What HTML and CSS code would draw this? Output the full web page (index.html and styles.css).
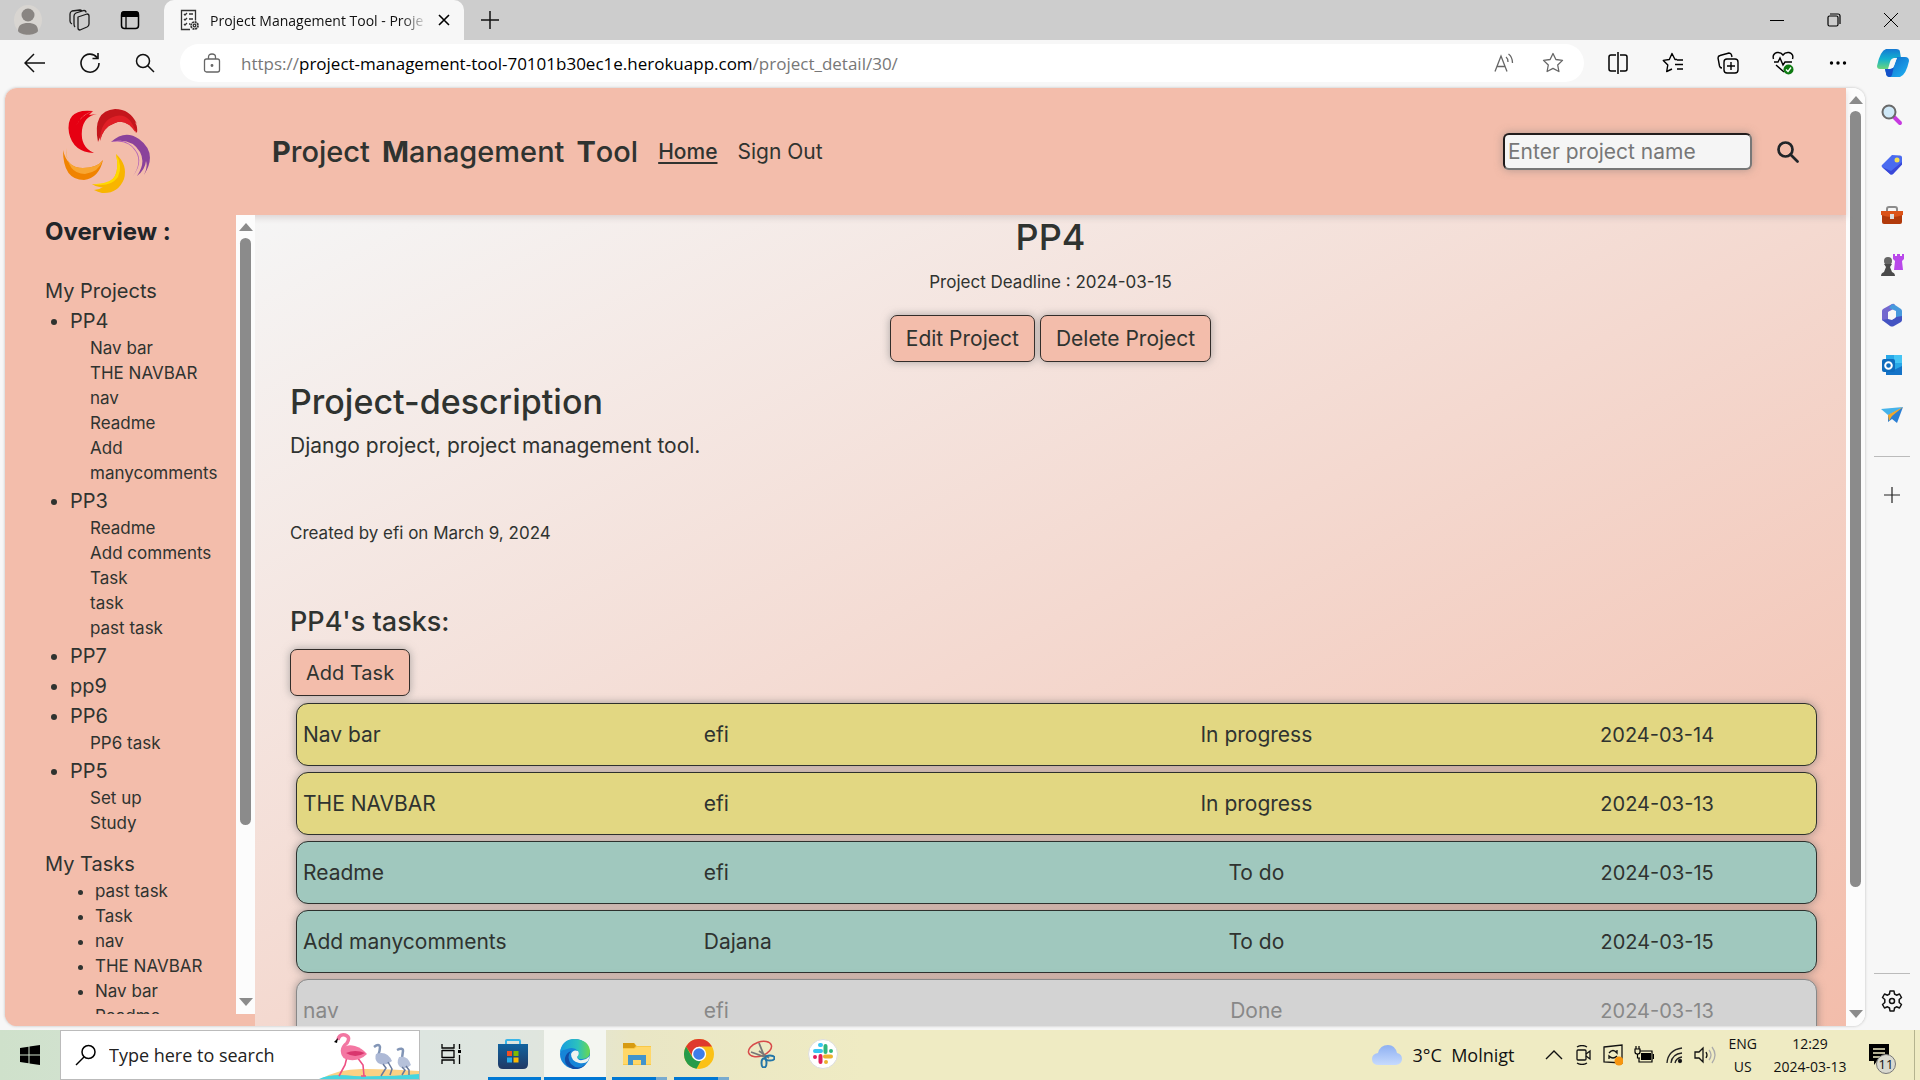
FILE: index.html
```html
<!DOCTYPE html>
<html lang="en">
<head>
<meta charset="utf-8">
<title>Project Management Tool - Project Detail</title>
<link rel="stylesheet" href="styles.css">
</head>
<body>
<div class="tabstrip">
  <button class="strip-btn" aria-label="Profile"><svg width="28" height="34" viewBox="0 0 28 34"><ellipse cx="14" cy="17" rx="14" ry="15" fill="#d8d5d1"/><circle cx="14" cy="12" r="6.500" fill="#898582"/><path d="M4 28c0-6 4-8 10-8s10 2 10 8c-3 5-17 5-20 0z" fill="#898582"/></svg></button>
  <button class="strip-btn" aria-label="Workspaces"><svg width="22" height="22" viewBox="0 0 22 22" fill="none" stroke="#1b1b1b" stroke-width="1.300"><path d="M10 8l9-3q2 0 2 2v8q0 2-2 3l-7 3q-2 0-2-2z" stroke-linejoin="round"/><path d="M7 18q-1-1-1-3V7q0-2 2-3l8-2.500q2 0 2 2M4 15q-2-1-2-3V5q0-2 2-3l8-1q1 0 2 1"/></svg></button>
  <button class="strip-btn" aria-label="Tab actions"><svg width="20" height="20" viewBox="0 0 20 20"><rect x="1.500" y="2" width="17" height="16.500" rx="3" fill="none" stroke="#000" stroke-width="1.500"/><path d="M1 7V4q0-3 3-3h12q3 0 3 3v3z"/><path d="M6 7v11" stroke="#000" stroke-width="1.300"/></svg></button>
  <div class="tab">
    <svg width="20" height="22" viewBox="0 0 20 22" fill="none" stroke="#333" stroke-width="1.300"><path d="M10 20.500H1.500v-19h14v10"/><path d="M4 5l1 1 2-2M4 10l1 1 2-2M4 15l1 1 2-2M9 5h4M9 10h4M9 15h1"/><circle cx="14.500" cy="16.500" r="3.500" stroke-width="1.800" stroke-dasharray="2 .7"/><circle cx="14.500" cy="16.500" r="1.300"/></svg>
    <span class="tab-title">Project Management Tool - Proje</span>
    <button class="bare" aria-label="Close tab"><svg width="12" height="12" viewBox="0 0 12 12" stroke="#000" stroke-width="1.600"><path d="M1 1l10 10M11 1L1 11"/></svg></button>
  </div>
  <button class="strip-btn new-tab" aria-label="New tab"><svg width="18" height="18" viewBox="0 0 18 18" stroke="#111" stroke-width="1.500"><path d="M9 0v18M0 9h18"/></svg></button>
  <div class="window-controls">
    <button class="bare" aria-label="Minimise"><svg width="14" height="14" viewBox="0 0 14 14" stroke="#000"><path d="M0 7.500h14"/></svg></button>
    <button class="bare" aria-label="Restore"><svg width="14" height="14" viewBox="0 0 14 14" fill="none" stroke="#000" stroke-width="1.200"><rect x="1" y="3" width="10" height="10" rx="1.500"/><path d="M3 1h8q2 0 2 2v8"/></svg></button>
    <button class="bare" aria-label="Close"><svg width="14" height="14" viewBox="0 0 14 14" stroke="#000"><path d="M0 0l14 14M14 0L0 14"/></svg></button>
  </div>
</div>

<div class="toolbar">
  <button class="tool" aria-label="Back"><svg width="22" height="20" viewBox="0 0 22 20" fill="none" stroke="#111" stroke-width="1.500"><path d="M21 10H2M10 1L1 10l9 9"/></svg></button>
  <button class="tool" aria-label="Refresh"><svg width="22" height="22" viewBox="0 0 22 22" fill="none" stroke="#111" stroke-width="1.600"><path d="M18 5.500A9 9 0 1 0 20 11M19 1v5.500h-5.500"/></svg></button>
  <button class="tool" aria-label="Search"><svg width="20" height="20" viewBox="0 0 20 20" fill="none" stroke="#111" stroke-width="1.500"><circle cx="8" cy="8" r="6.500"/><path d="M12.500 12.500L19 19"/></svg></button>
  <div class="address">
    <svg width="18" height="20" viewBox="0 0 18 20" fill="none" stroke="#666" stroke-width="1.300"><rect x="1.500" y="6" width="15" height="13" rx="2"/><path d="M5.500 6V4q0-3 3.500-3t3.500 3v2"/><circle cx="9" cy="12.500" r=".8" fill="#666"/></svg>
    <p class="url">https://<span>project-management-tool-70101b30ec1e.herokuapp.com</span>/project_detail/30/</p>
    <svg width="20" height="20" viewBox="0 0 20 20" fill="none" stroke="#666" stroke-width="1.300"><path d="M1 18.500L7 3l6 15.500M3 13.500h8M12 4q2 1.500 2 5M14.500 1q4 3 4 9"/></svg>
    <svg width="22" height="22" viewBox="0 0 22 22" fill="none" stroke="#666" stroke-width="1.300" stroke-linejoin="round"><path d="M11 1.500l2.900 6 6.600.9-4.800 4.600 1.200 6.500-5.900-3.100-5.900 3.100L6.300 13 1.500 8.400l6.600-.9z"/></svg>
  </div>
  <div class="toolset">
    <button class="tool" aria-label="Split screen"><svg width="20" height="22" viewBox="0 0 20 22" fill="none" stroke="#000" stroke-width="1.500"><path d="M10 0v22M8 3H3Q1 3 1 5v12q0 2 2 2h5M12 3h5q2 0 2 2v12q0 2-2 2h-5"/></svg></button>
    <button class="tool" aria-label="Favourites"><svg width="22" height="22" viewBox="0 0 22 22" fill="none" stroke="#000" stroke-width="1.400" stroke-linejoin="round"><path d="M15 7.500h-2L10 1.500l-2.700 6-6 .9 4.500 4.600-1.100 6.500L10 17M15 8h6M13 12.500h8M15 17h6"/></svg></button>
    <button class="tool" aria-label="Collections"><svg width="22" height="22" viewBox="0 0 22 22" fill="none" stroke="#000" stroke-width="1.400"><path d="M5 16Q3 16 2.500 14L1 6q0-2 2-2.500L12 1q2 0 2.500 2l.5 2"/><rect x="7" y="7" width="14" height="14" rx="3"/><path d="M14 10v8M10 14h8"/></svg></button>
    <button class="tool" aria-label="Browser essentials"><svg width="22" height="24" viewBox="0 0 22 24" fill="none" stroke="#000" stroke-width="1.400"><path d="M1.500 8Q0 3 5 1.500 9 1 11 4q2-3 6-2.500Q22 3 20.500 8M2 11h4l2-4 3 7 2-3h7M4 14l8 7"/><circle cx="16.500" cy="18.500" r="5" fill="#0e7a12" stroke="none"/><path d="M14 18.500l2 2 3-4" stroke="#fff"/></svg></button>
    <button class="tool" aria-label="More"><svg width="18" height="6" viewBox="0 0 18 6"><circle cx="2.500" cy="3" r="1.700"/><circle cx="9" cy="3" r="1.700"/><circle cx="15.500" cy="3" r="1.700"/></svg></button>
    <button class="tool" aria-label="Copilot"><svg width="32" height="28" viewBox="0 0 32 28"><defs><linearGradient id="ca" x1="0" y1="0" x2="0" y2="1"><stop offset="0" stop-color="#1579d3"/><stop offset=".5" stop-color="#12b0cf"/><stop offset="1" stop-color="#6bd67b"/></linearGradient><linearGradient id="cb" x1="0" y1="0" x2="1" y2="1"><stop offset="0" stop-color="#0c62c7"/><stop offset="1" stop-color="#21b5f3"/></linearGradient></defs><path d="M9 0h10q4 0 4 3l1 6h-6q-4 0-5 4l-2 7H3q-3 0-3-3 3-15 9-17z" fill="url(#ca)"/><path d="M23 28H13q-4 0-4-4l-1-4h5q3 0 4-3l3-9h8q4 0 4 4-3 14-9 16z" fill="url(#cb)"/><path d="M8 20h5q3 0 4-3l-2 9q-1 2-2 2-4 0-4-4z" fill="#1451c9"/><path d="M17 9h3l-4 10h-3z" fill="#f7f7f7"/></svg></button>
  </div>
</div>

<div class="workspace">
  <div class="page">
    <div class="site">
      <header class="site-header">
        <a class="logo" href="#" aria-label="Project Management Tool home"><svg width="90" height="88" viewBox="0 0 90 88">
          <path d="M32 3Q4 0 8 25 12 44 33 45 19 39 21 22 23 8 36 6L28 7z" fill="#e60012"/><path d="M32 3Q19 8 15 18 20 8 27 5z" fill="#f3b9a8"/>
          <path d="M37 34Q31 3 54 1 69 1 76 16L74 14q3 5 2 11Q65 10 54 15q-12 4-15 18l1-6z" fill="#c4161c"/><path d="M39 33Q39 12 55 8q14-3 20 17Q65 10 54 15q-12 4-15 18z" fill="#e01f26"/>
          <path d="M50 34Q64 21 78 31q19 14 5 36 4-8 2-14-1 9-9 15 9-13 3-24Q70 29 50 34z" fill="#8a429b"/><path d="M50 34Q62 30 71 38q14 13 1 30 9-13 3-24Q68 31 50 34z" fill="#b060b8"/>
          <path d="M2 42Q6 60 22 60q14 0 20-8-4 18-19 20Q2 72 2 42z" fill="#f08300"/><path d="M5 40q-1 20 17 20 14 0 20-8-4 12-18 14Q6 66 5 40z" fill="#f8a632"/>
          <path d="M55 46Q67 57 63 71 57 86 41 85 37 84 33 82q5 0 9-3-6 1-11-3 18 2 23-8 4-8 1-22z" fill="#f8b500"/><path d="M55 46q7 12 2 23-8 11-26 7 18 0 23-8 4-8 1-22z" fill="#ffd900"/></svg></a>
        <h1 class="brand"><span><b>P</b>roject</span><span><b>M</b>anagement</span><span><b>T</b>ool</span></h1>
        <nav class="nav"><a class="current" href="#">Home</a><a href="#">Sign Out</a></nav>
        <form class="search"><input type="text" placeholder="Enter project name" aria-label="Enter project name"><button class="bare" type="button" aria-label="Search projects"><svg width="22" height="22" viewBox="0 0 22 22" fill="none" stroke="#212529" stroke-width="2.700"><circle cx="8.500" cy="8.500" r="7"/><path d="M13.500 13.500l7 7" stroke-linecap="round"/></svg></button></form>
      </header>
      <div class="site-body">
        <aside class="overview">
          <div class="overview-scroll">
            <h2>Overview :</h2>
            <h3>My Projects</h3>
            <ul class="projects">
              <li><a href="#">PP4</a><ul><li><a href="#">Nav bar</a></li><li><a href="#">THE NAVBAR</a></li><li><a href="#">nav</a></li><li><a href="#">Readme</a></li><li><a href="#">Add<br>manycomments</a></li></ul></li>
              <li><a href="#">PP3</a><ul><li><a href="#">Readme</a></li><li><a href="#">Add comments</a></li><li><a href="#">Task</a></li><li><a href="#">task</a></li><li><a href="#">past task</a></li></ul></li>
              <li><a href="#">PP7</a></li>
              <li><a href="#">pp9</a></li>
              <li><a href="#">PP6</a><ul><li><a href="#">PP6 task</a></li></ul></li>
              <li><a href="#">PP5</a><ul><li><a href="#">Set up</a></li><li><a href="#">Study</a></li></ul></li>
            </ul>
            <h3>My Tasks</h3>
            <ul class="my-tasks"><li><a href="#">past task</a></li><li><a href="#">Task</a></li><li><a href="#">nav</a></li><li><a href="#">THE NAVBAR</a></li><li><a href="#">Nav bar</a></li><li><a href="#">Readme</a></li></ul>
          </div>
          <div class="scrollbar"><i class="up"></i><div class="track"><div class="thumb" style="height:78%"></div></div><i class="down"></i></div>
        </aside>
        <main class="content">
          <section class="intro">
            <h2>PP4</h2>
            <p>Project Deadline : 2024-03-15</p>
            <div class="actions"><button class="btn">Edit Project</button><button class="btn">Delete Project</button></div>
          </section>
          <section class="description">
            <h3>Project-description</h3>
            <p>Django project, project management tool.</p>
            <p class="meta">Created by efi on March 9, 2024</p>
          </section>
          <section class="tasks">
            <h4>PP4's tasks:</h4>
            <button class="btn">Add Task</button>
            <table>
              <tbody>
              <tr class="progress"><td>Nav bar</td><td>efi</td><td>In progress</td><td>2024-03-14</td></tr>
              <tr class="progress"><td>THE NAVBAR</td><td>efi</td><td>In progress</td><td>2024-03-13</td></tr>
              <tr class="todo"><td>Readme</td><td>efi</td><td>To do</td><td>2024-03-15</td></tr>
              <tr class="todo"><td>Add manycomments</td><td>Dajana</td><td>To do</td><td>2024-03-15</td></tr>
              <tr class="done"><td>nav</td><td>efi</td><td>Done</td><td>2024-03-13</td></tr>
              </tbody>
            </table>
          </section>
        </main>
      </div>
    </div>
    <div class="scrollbar"><i class="up"></i><div class="track"><div class="thumb" style="height:87%"></div></div><i class="down"></i></div>
  </div>
  <aside class="edge-bar">
    <button class="edge-btn" aria-label="Search"><svg width="22" height="22" viewBox="0 0 22 22"><path d="M13 13l6 6" stroke="#c63ae0" stroke-width="4" stroke-linecap="round"/><circle cx="8" cy="8" r="6.500" fill="#cfe8f7" stroke="#696969" stroke-width="2"/></svg></button>
    <button class="edge-btn" aria-label="Shopping"><svg width="22" height="22" viewBox="0 0 22 22"><path d="M11 1l8 .5q2 0 2 2v7L12 20q-2 1-3 0l-8-7q-1-1 0-2z" fill="#4a6bf0"/><path d="M1 13l8 7q1 1 3 0l9-9.500V8L10 17z" fill="#3a48d8"/><circle cx="16" cy="6" r="2.500" fill="#f2e055"/></svg></button>
    <button class="edge-btn" aria-label="Tools"><svg width="24" height="20" viewBox="0 0 24 20"><path d="M7 6V4q0-2 2-2h6q2 0 2 2v2" fill="none" stroke="#8c8c8c" stroke-width="2"/><rect x="2" y="6" width="20" height="13" rx="2" fill="#b23a0b"/><path d="M1 6h22v4q-11 4-22 0z" fill="#dc5318"/><rect x="10" y="9" width="4" height="5" fill="#ddd"/></svg></button>
    <button class="edge-btn" aria-label="Games"><svg width="24" height="24" viewBox="0 0 24 24"><path d="M13 1h2v2h2V1h3v2h2V1h2v5l-2 2 1 9H14l1-9-2-2z" fill="#b948ea"/><circle cx="8" cy="8" r="4" fill="#666"/><path d="M4 11h8l-2 3 2 5q3 1 3 4H1q0-3 3-4l2-5z" fill="#4a4a4a"/></svg></button>
    <button class="edge-btn" aria-label="Microsoft 365"><svg width="22" height="24" viewBox="0 0 22 24"><path d="M11 1L2 6q-1 1-1 2v9l6 3V9l7-4V2q-1-2-3-1z" fill="#7468cf"/><path d="M14 2l6 4q1 1 1 2v9l-6-3V8L8 5l3-4z" fill="#4799dd"/><path d="M21 13v4q0 1-1 2l-7 4q-2 1-4 0l-8-6 6-1 4 1 4-3z" fill="#4353c2"/><circle cx="11" cy="12" r="4" fill="#f7f7f7"/></svg></button>
    <button class="edge-btn" aria-label="Outlook"><svg width="22" height="22" viewBox="0 0 22 22"><path d="M5 1h16v20H5z" fill="#28a8e8"/><path d="M13 1h8v8h-8z" fill="#45c5f5"/><path d="M5 12l8 4 8-4v9H5z" fill="#1473c8"/><rect x="1" y="5" width="13" height="13" rx="2" fill="#0f6cbd"/><circle cx="7.500" cy="11.500" r="3.300" fill="none" stroke="#fff" stroke-width="2"/></svg></button>
    <button class="edge-btn" aria-label="Drop"><svg width="22" height="18" viewBox="0 0 22 18"><path d="M0 3l22-2L7 9z" fill="#45b3ea"/><path d="M22 1L16 17l-5-4-4 3V9z" fill="#2b7fd4"/><path d="M22 1L7 9l1 6 3-5z" fill="#f4a82a"/></svg></button>
    <hr>
    <button class="edge-btn" aria-label="Add"><svg width="16" height="16" viewBox="0 0 16 16" stroke="#222" stroke-width="1.200"><path d="M8 0v16M0 8h16"/></svg></button>
    <hr class="push">
    <button class="edge-btn" aria-label="Settings"><svg width="22" height="22" viewBox="0 0 22 22" fill="none" stroke="#111" stroke-width="1.500" stroke-linejoin="round"><path d="M9 1h4l.5 3 2 1.200L18.500 4l2 3.500L18.200 9.500v3l2.300 2-2 3.500-3-1.200-2 1.200-.5 3H9l-.5-3-2-1.200-3 1.200-2-3.500 2.300-2v-3l-2.300-2 2-3.500 3 1.200 2-1.200z"/><circle cx="11" cy="11" r="2.500"/></svg></button>
  </aside>
</div>

<footer class="taskbar">
  <button class="start" aria-label="Start"><svg width="20" height="20" viewBox="0 0 20 20"><path d="M0 3l8.500-1.200v7.700H0zM9.500 1.600L20 0v9.500H9.500zM0 10.500h8.500v7.700L0 17zM9.500 10.500H20V20L9.500 18.400z"/></svg></button>
  <label class="os-search">
    <svg width="22" height="22" viewBox="0 0 22 22" fill="none" stroke="#000" stroke-width="1.500"><circle cx="13.500" cy="8" r="6.500"/><path d="M9 13L1 21"/></svg>
    <input type="text" placeholder="Type here to search" aria-label="Type here to search">
    <svg class="birds" width="100" height="47" viewBox="0 0 100 47"><path d="M2 47q18-11 45-10 25 0 53 2v8z" fill="#fbd184"/><path d="M0 47q12-6 35-3 32 1 65-2v5z" fill="#45d5df"/><path d="M28 25l-2 8-6 11M38 25l6 8 1 11M42 44h5" fill="none" stroke="#ee4f83" stroke-width="1.600"/><path d="M19 8Q20 2 26 3q6 2 2 8-6 5-4 10" fill="none" stroke="#f277a2" stroke-width="3.500"/><path d="M22 20q3-9 14-6 7 2 12 8-7 7-17 6-9-1-9-8z" fill="#f477a2"/><path d="M27 21q9-4 19 0-10 6-19 0z" fill="#d9366e"/><path d="M19 6l-4 4 3 1z"/><path d="M55 15q5-4 6 0 0 4-2 9M78 18q6-3 6 1l-1 7" fill="none" stroke="#8295b6" stroke-width="2.500"/><path d="M57 22q11-4 16 7-7 6-14 2-4-4-2-9z" fill="#adb9d6"/><path d="M80 25q9-2 12 8-5 5-11 2-4-4-1-10z" fill="#b6c1da"/><path d="M64 32l3 4-5 8M69 30l4 7-2 6M83 35l3 3-3 5M87 34l3 4v5" fill="none" stroke="#68799c" stroke-width="1.500"/></svg>
  </label>
  <button class="app" aria-label="Task view"><svg width="20" height="20" viewBox="0 0 20 20" fill="none" stroke="#000" stroke-width="1.300"><path d="M1 0v4h12V0M1 20v-4h12v4M1 6v8M13 6v8M1 6.500h12M1 13.500h12M18.500 0v5M18.500 11v9"/><path d="M17 6h3v3h-3z" fill="#000" stroke="none"/></svg></button>
  <button class="app running" aria-label="Store"><svg width="30" height="30" viewBox="0 0 30 30"><defs><linearGradient id="st" x1="0" y1="0" x2="0" y2="1"><stop stop-color="#11639f"/><stop offset="1" stop-color="#203864"/></linearGradient></defs><path d="M8 6V2q0-1 1-1h12q1 0 1 1v4" fill="none" stroke="#39b5e8" stroke-width="2"/><path d="M0 5h30v20q0 5-5 5H5q-5 0-5-5z" fill="url(#st)"/><path d="M9 12h5v5H9z" fill="#f25022"/><path d="M15.500 12h5v5h-5z" fill="#7fba00"/><path d="M9 18.500h5v5H9z" fill="#29abe9"/><path d="M15.500 18.500h5v5h-5z" fill="#ffb900"/></svg></button>
  <button class="app running active" aria-label="Edge"><svg width="30" height="30" viewBox="0 0 30 30"><defs><linearGradient id="ea"><stop stop-color="#159be0"/><stop offset=".6" stop-color="#2cc2bd"/><stop offset="1" stop-color="#6bd84d"/></linearGradient></defs><circle cx="15" cy="15" r="15" fill="#1685d8"/><path d="M0 13Q2 0 15 0q14 1 15 12 0 8-8 8-5 0-5-2 3-3 1-6-4-5-11-2-5 1-7 3z" fill="url(#ea)"/><path d="M11 12q-5 6 0 13 7 7 15 0-5 6-13 5Q4 27 5 19q1-5 6-7z" fill="#124ca5"/><path d="M17 18q3-3 1-6-5-2-7 3 0 7 8 9 6 1 9-2l2-5-4 3q-8 3-9-2z" fill="#eef3ef"/></svg></button>
  <button class="app running stacked" aria-label="File Explorer"><svg width="28" height="24" viewBox="0 0 28 24"><path d="M0 1h11l3 3h14v19H0z" fill="#f9c846"/><path d="M0 1h11l2 3-2 2H0z" fill="#d79b12"/><path d="M0 7h11l3-2h14v17H0z" fill="#ffd768"/><path d="M5 23V13h18v10h-5v-5h-8v5z" fill="#4294cc"/></svg></button>
  <button class="app running stacked" aria-label="Chrome"><svg width="30" height="30" viewBox="0 0 30 30"><circle cx="15" cy="15" r="15" fill="#fbc116"/><path d="M2 7.500A15 15 0 0 1 28 7.500H15L9 18z" fill="#df3a2d"/><path d="M2 7.500l6.500 11 8.500 3-4.500 8.300A15 15 0 0 1 2 7.500z" fill="#269b4a"/><circle cx="15" cy="15" r="7.200" fill="#fff"/><circle cx="15" cy="15" r="5.800" fill="#3e7de8"/></svg></button>
  <button class="app" aria-label="Snipping Tool"><svg width="28" height="28" viewBox="0 0 28 28" fill="none"><ellipse cx="13" cy="9" rx="12" ry="7" transform="rotate(-20 13 9)" stroke="#d84a4a" stroke-width="1.500"/><path d="M12 3l6 15M4 12l14 5M12 11l10 7" stroke="#777" stroke-width="1.800"/><ellipse cx="17" cy="23" rx="2.500" ry="4.500" stroke="#2476a8" stroke-width="2"/><ellipse cx="23" cy="18" rx="4.500" ry="2.500" stroke="#2476a8" stroke-width="2"/></svg></button>
  <button class="app" aria-label="Slack"><svg width="30" height="30" viewBox="0 0 30 30"><circle cx="15" cy="15" r="14.500" fill="#fff" stroke="#ddd"/><g stroke-width="4" stroke-linecap="round"><path d="M7 12h6M12 6h1" stroke="#36c5f0"/><path d="M17.500 7v6M23 12h0" stroke="#2eb67d"/><path d="M17 17.500h6M18 23h0" stroke="#ecb22e"/><path d="M12.500 17v6M7 18h0" stroke="#e01e5a"/></g></svg></button>
  <div class="tray">
    <div class="weather"><svg width="30" height="22" viewBox="0 0 30 22"><defs><linearGradient id="cl" x1="0" y1="0" x2="0" y2="1"><stop stop-color="#8eb0f2"/><stop offset="1" stop-color="#c6dafd"/></linearGradient></defs><path d="M7 21Q0 21 0 15q0-5 6-6 2-8 10-8 7 0 9 8 5 1 5 6t-6 6z" fill="url(#cl)"/></svg><span>3°C&nbsp; Molnigt</span></div>
    <div class="status">
      <svg width="18" height="18" viewBox="0 0 18 18" fill="none" stroke="#111" stroke-width="1.400"><path d="M1 13l8-8 8 8"/></svg>
      <svg width="18" height="20" viewBox="0 0 18 20" fill="none" stroke="#111" stroke-width="1.300"><rect x="3" y="5" width="9" height="10" rx="1"/><path d="M12 9l4-3v8l-4-3M3 2q5-3 10 0M3 18q5 3 10 0"/></svg>
      <svg width="20" height="22" viewBox="0 0 20 22" fill="none" stroke="#111" stroke-width="1.300"><path d="M1 3l18-2v18L1 18zM6 9q4-5 8 0V6M14 12q-4 4-8 0v3"/><circle cx="16" cy="17" r="4.500" fill="#f7950f" stroke="none"/></svg>
      <svg width="20" height="18" viewBox="0 0 20 18"><path d="M7 7h10v7H7z"/><path d="M6 5h12v11H5v-4M19.500 8v5M1 3h5v3q0 2-2.500 2T1 6zM2 0v3M5 0v3M3.500 8v4H6" fill="none" stroke="#000" stroke-width="1.200"/></svg>
      <svg width="18" height="18" viewBox="0 0 18 18" fill="none" stroke="#222" stroke-width="1.300"><path d="M2 17Q3 4 17 2M6 17q1-9 11-10M10 17q1-5 7-6"/><circle cx="15" cy="15" r="1.500" fill="#000"/></svg>
      <svg width="22" height="18" viewBox="0 0 22 18" fill="none" stroke="#111" stroke-width="1.300"><path d="M1 6h4l4-4v14l-4-4H1zM12 6q2 3 0 6"/><path d="M15 4q4 5 0 10M18 1q6 8 0 16" stroke="#aaa"/></svg>
    </div>
    <p class="two-line lang">ENG<br>US</p>
    <p class="two-line clock">12:29<br>2024-03-13</p>
    <button class="notify" aria-label="Notifications"><svg width="22" height="22" viewBox="0 0 22 22"><path d="M0 0h20v17H8l-3 4v-4H0z"/><path d="M4 5h12M4 9h12M4 13h8" stroke="#efebc5" stroke-width="1.400"/></svg><span>11</span></button>
  </div>
</footer>
</body>
</html>
```
FILE: styles.css
```css
* { box-sizing: border-box; }
body { margin: 0; min-height: 100vh; height: 100vh; display: flex; flex-direction: column; background: #f7f7f7; color: #2f3330; font-family: Inter, "Open Sans", sans-serif; overflow: hidden; }
h1, h2, h3, h4, p, ul { margin: 0; padding: 0; font-weight: 400; }
a { color: inherit; text-decoration: none; }
button { font: inherit; color: inherit; padding: 0; border: 0; background: none; display: flex; align-items: center; justify-content: center; }
svg { display: block; flex: none; }

/* Browser chrome */
.tabstrip, .toolbar, .taskbar { font-family: "Open Sans", "Noto Sans", sans-serif; color: #111; flex: none; }
.tabstrip { height: 40px; display: flex; background: #cdcdcd; padding-left: 2px; }
.strip-btn { width: 51px; }
.tab { width: 300px; margin-left: 9px; padding: 0 14px 0 16px; background: #f7f7f7; border-radius: 10px 10px 0 0; display: flex; align-items: center; gap: 10px; }
.tab-title { flex: 1; font-size: 14px; white-space: nowrap; overflow: hidden; mask-image: linear-gradient(to right, #000 88%, transparent); }
.window-controls { margin-left: auto; display: flex; padding-right: 1px; }
.window-controls button { width: 57px; }
.toolbar { height: 48px; display: flex; align-items: center; padding: 0 0 2px 7px; }
.tool { width: 55px; height: 40px; }
.address { flex: 1; height: 38px; margin-left: 8px; padding: 0 20px 0 23px; border-radius: 19px; background: #fff; display: flex; align-items: center; gap: 20px; }
.address > svg:last-child { margin-left: 8px; }
.url { flex: 1; font-size: 17px; color: #777; white-space: nowrap; }
.url span { color: #000; }
.toolset { display: flex; padding-left: 6px; }

/* Web page frame */
.workspace { flex: 1; min-height: 0; display: flex; padding: 0 0 4px 5px; }
.page { flex: 1; min-width: 0; display: flex; border-radius: 12px; overflow: hidden; box-shadow: 0 0 3px #bbb; background: #fcfcfc; }
.site { flex: 1; min-width: 0; display: flex; flex-direction: column; background: #f3bdab; }
.scrollbar { width: 19px; flex: none; background: #fcfcfc; display: flex; flex-direction: column; align-items: center; padding: 8px 0; gap: 7px; }
.scrollbar .track { flex: 1; width: 11px; }
.scrollbar .thumb { background: #8b8b8b; border-radius: 6px; }
.up, .down { width: 0; border: 7px solid transparent; }
.up { border-top: 0; border-bottom: 8px solid #8b8b8b; }
.down { border-bottom: 0; border-top: 8px solid #8b8b8b; }

.site-header { height: 127px; flex: none; display: flex; align-items: center; padding: 0 47px 0 56px; position: relative; box-shadow: 0 3px 6px #b9a6a466; }
.brand { display: flex; gap: 12px; margin-left: 121px; font-size: 29px; font-weight: 500; }
.brand b { font-weight: 700; }
.nav { display: flex; gap: 20px; margin-left: 20px; font-size: 21px; }
.nav .current { font-weight: 500; text-decoration: underline; text-underline-offset: 3px; }
.search { margin-left: auto; display: flex; gap: 25px; }
.search input { width: 249px; height: 37px; padding: 0 3px; font: 21px Inter, sans-serif; background: #f5f5f5; border: 2px solid; border-color: #211c1c #777 #777 #211c1c; border-radius: 6px; box-shadow: 0 0 8px #7778; }
input::placeholder { color: #777; opacity: 1; }
.site-body { flex: 1; min-height: 0; display: flex; }

/* Project overview */
.overview { width: 250px; flex: none; display: flex; padding-bottom: 12px; background: #f3bdab; position: relative; }
.overview-scroll { flex: 1; min-width: 0; overflow: hidden; padding-left: 40px; }
.overview h2 { font-size: 24px; font-weight: 700; line-height: 34px; margin-bottom: 27px; color: #212529; }
.overview h3 { font-size: 20px; line-height: 30px; }
.projects { padding-left: 25px; margin-bottom: 13px; font-size: 20px; line-height: 30px; }
.projects ul { list-style: none; padding-left: 20px; }
.projects ul, .my-tasks { font-size: 17px; line-height: 25px; }
.my-tasks { padding-left: 50px; }

/* Project detail */
.content { flex: 1; min-width: 0; padding: 0 29px 0 35px; overflow: hidden; background: linear-gradient(to bottom right, #f5f5f5, #f3bdab); font-size: 21px; line-height: 30px; }
.intro { display: flex; flex-direction: column; align-items: center; margin-right: 6px; }
.intro h2 { font-size: 36px; font-weight: 500; line-height: 44px; margin-bottom: 10px; }
.intro p, .description .meta { font-size: 17px; line-height: 26px; }
.actions { display: flex; gap: 5px; margin-top: 20px; }
.btn { height: 47px; padding: 0 15px; border: 1px solid #332d2a; border-radius: 7px; background: #f3bdab; box-shadow: 0 0 8px #7779; }
.description h3 { font-size: 34px; font-weight: 500; line-height: 40px; margin: 20px 0 9px; }
.description .meta { margin-top: 59px; }
.tasks h4 { font-size: 27px; font-weight: 500; line-height: 34px; margin: 59px 0 10px; }
.tasks .btn { font-size: 20px; }
.tasks table, .tasks tbody { display: block; }
.tasks tbody { display: grid; gap: 6px; padding: 7px 0 0 6px; }
.tasks tr { display: grid; grid-template-columns: 401fr 317fr 484fr 318fr; align-items: center; height: 63px; border: 1px solid #2d302d; border-radius: 12px; box-shadow: 0 0 8px #6669; }
.tasks td { padding: 0 6px; }
.tasks td:nth-child(n+3) { text-align: center; }
.tasks td:last-child { font-size: 20px; }
.progress { background: #e2d782; }
.todo { background: #a0c8be; }
.tasks .done { background: #d3d3d3; color: #888; border-color: #888; }

/* Browser side panel */
.edge-bar { width: 55px; flex: none; display: flex; flex-direction: column; align-items: center; padding: 2px 1px 0 0; }
.edge-btn { width: 50px; height: 50px; }
.edge-bar hr { width: 36px; margin: 16px 0 13px; border: 0; border-top: 1px solid #bbb; }
.edge-bar .push { margin: auto 0 2px; }

/* Desktop taskbar */
.taskbar { height: 50px; display: flex; background: linear-gradient(to right, #cfe1cb, #dde5e0 22%, #dfe5de 28%, #e9e6c5 33%, #efebc3 45%); }
.start { width: 60px; }
.os-search { width: 360px; border: 1px solid #bbb; background: #fff; display: flex; align-items: center; padding-left: 14px; gap: 12px; }
.os-search input { flex: 1; min-width: 0; border: 0; padding: 0; background: none; font: 18px "Open Sans", sans-serif; }
.os-search input::placeholder { color: #222; }
.app { width: 62px; border-bottom: 3px solid transparent; }
.running { border-image: linear-gradient(to right, transparent 8px, #0078d4 8px, #0078d4 56px, transparent 56px) 3; }
.active { background: #f4f6f1; border-image: linear-gradient(#0078d4, #0078d4) 3; }
.stacked { border-image: linear-gradient(to right, transparent 8px, #0078d4 8px, #0078d4 48px, #79abcf 48px, #79abcf 58px, transparent 58px) 3; }
.tray { margin-left: auto; display: flex; align-items: center; padding-right: 5px; }
.weather { display: flex; align-items: center; gap: 10px; font-size: 18px; }
.status { display: flex; align-items: center; gap: 11px; margin: 0 13px 0 30px; }
.two-line { font-size: 14px; line-height: 23px; text-align: center; }
.clock { margin-left: 14px; width: 78px; }
.notify { width: 66px; height: 50px; padding-right: 3px; border-right: 1px solid #b5b38f; position: relative; }
.notify span { position: absolute; left: 27px; top: 24px; width: 20px; height: 20px; border: 1px solid #777; border-radius: 50%; background: #d9d9cf; font-size: 13px; line-height: 18px; }
```
